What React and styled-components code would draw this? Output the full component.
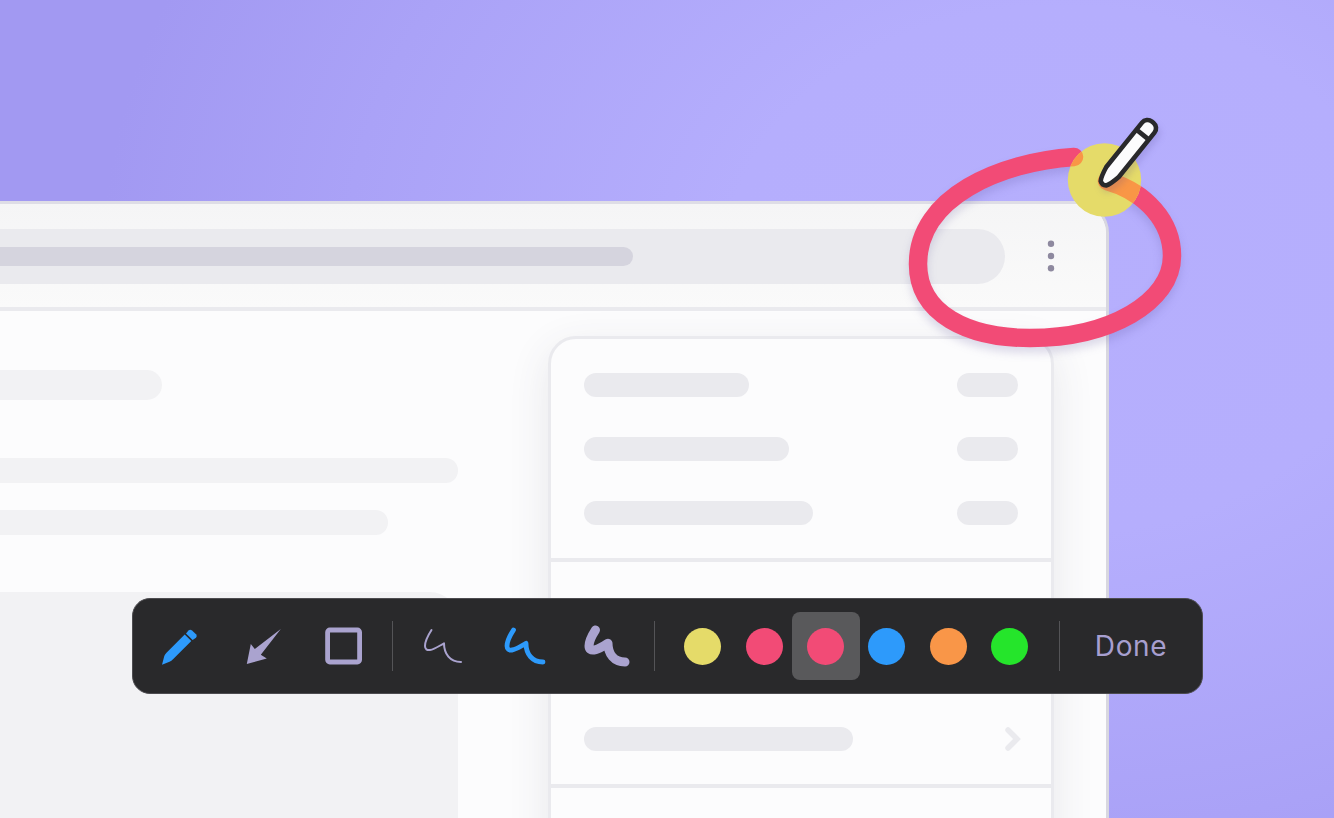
import React from "react";
import styled, { createGlobalStyle } from "styled-components";

const GlobalStyle = createGlobalStyle`
  *, *::before, *::after { box-sizing: border-box; }
  body { margin: 0; overflow: hidden; }
`;

const Scene = styled.main`
  position: relative;
  width: 1334px;
  height: 818px;
  overflow: hidden;
  padding-top: 201px;
  background: radial-gradient(ellipse 1020px 800px at 1060px 270px, #b6affd 0%, #b5aefd 33%, #aaa2f7 70%, #a299f2 94%);
  font-family: Inter, "Liberation Sans", sans-serif;
`;

const Browser = styled.section`
  display: flex;
  flex-direction: column;
  width: 1109px;
  height: 640px;
  overflow: hidden;
  border: 3px solid #d8d7e0;
  border-top-color: #dedde6;
  border-left: 0;
  border-radius: 0 32px 0 0;
  background: #fcfcfd;
`;

const BrowserBar = styled.header`
  display: flex;
  align-items: center;
  flex: none;
  height: 107px;
  border-bottom: 4px solid #eaeaee;
  background: linear-gradient(#f5f5f6, #fafafa);
`;

const AddressField = styled.div`
  display: flex;
  align-items: center;
  width: 1005px;
  height: 55px;
  margin-top: 1px;
  border-radius: 0 28px 28px 0;
  background: #eaeaee;
`;

const MenuDots = styled.svg`
  width: 8px;
  height: 34px;
  margin: 1px 0 0 42px;
  fill: #8e899f;
`;

const Page = styled.div`
  display: flex;
  flex: 1;
  min-height: 0;
`;

const Article = styled.div`
  flex: none;
  width: 548px;
  padding-top: 59px;
`;

const Bar = styled.div`
  width: ${(p) => p.$w}px;
  height: ${(p) => p.$h}px;
  margin-bottom: ${(p) => p.$after || 0}px;
  border-radius: ${(p) => (p.$flush ? `0 ${p.$h / 2}px ${p.$h / 2}px 0` : `${p.$h / 2}px`)};
  background: ${(p) => p.$tone || "#eaeaee"};
`;

const Media = styled.div`
  width: 458px;
  height: 260px;
  border-radius: 0 28px 0 0;
  background: #f2f2f4;
`;

const Panel = styled.aside`
  width: 506px;
  height: 600px;
  margin-top: 25px;
  border: 3px solid #eaeaee;
  border-radius: 28px 28px 0 0;
  background: #fcfcfd;
  box-shadow: 0 12px 42px rgba(60, 60, 80, 0.11);
`;

const PanelGroup = styled.div`
  display: flex;
  flex-direction: column;
  justify-content: ${(p) => (p.$end ? "flex-end" : "flex-start")};
  gap: 40px;
  height: ${(p) => p.$h}px;
  padding: 34px 33px 33px;
  border-bottom: 4px solid #eaeaee;
`;

const PanelRow = styled.div`
  display: flex;
  align-items: center;
  justify-content: space-between;
  height: 24px;
`;

const Chevron = styled.svg`
  width: 18px;
  height: 26px;
  margin-right: -4px;
  fill: none;
  stroke: #eaeaee;
  stroke-width: 5.5;
  stroke-linecap: round;
`;

const Annotation = styled.svg`
  position: absolute;
  inset: 0;
  width: 1334px;
  height: 818px;
  pointer-events: none;
`;

const Toolbar = styled.nav`
  position: absolute;
  left: 132px;
  top: 598px;
  display: flex;
  align-items: center;
  width: 1071px;
  height: 96px;
  border: 1px solid #4d4c50;
  border-radius: 18px;
  background: #29292b;
`;

const ToolGroup = styled.div`
  display: flex;
  align-items: center;
  justify-content: space-between;
  width: ${(p) => p.$w}px;
  padding: 0 ${(p) => p.$right}px 0 ${(p) => p.$left}px;
`;

const ToolButton = styled.button`
  display: flex;
  align-items: center;
  justify-content: center;
  width: 48px;
  height: 48px;
  padding: 0;
  border: 0;
  background: none;
  color: ${(p) => (p.$active ? "#2d9afb" : "#aaa3cf")};
`;

const ToolIcon = styled.svg`
  width: 48px;
  height: 48px;
  fill: ${(p) => (p.$line ? "none" : "currentColor")};
  stroke: ${(p) => (p.$line ? "currentColor" : "none")};
  stroke-width: ${(p) => p.$line || 0};
  stroke-linecap: round;
  stroke-linejoin: round;
`;

const Separator = styled.i`
  flex: none;
  width: 1px;
  height: 50px;
  background: #545457;
`;

const Swatches = styled.div`
  display: flex;
  align-items: center;
  width: 404px;
  padding-left: 17px;
`;

const SwatchButton = styled.button`
  display: flex;
  flex: none;
  align-items: center;
  justify-content: center;
  width: 68px;
  height: 68px;
  margin: 0 -3.3px;
  padding: 0;
  border: 0;
  border-radius: 8px;
  background: ${(p) => (p.$active ? "#59595b" : "transparent")};
`;

const Swatch = styled.i`
  width: 37px;
  height: 37px;
  border-radius: 50%;
  background: ${(p) => p.$color};
`;

const Done = styled.button`
  flex: 1;
  padding: 0;
  border: 0;
  background: none;
  color: #a79fd0;
  font: 400 28px/36px Inter, "Liberation Sans", sans-serif;
  letter-spacing: 0.6px;
`;

const loop =
  "M1074 157 C1000 162 918 197 918 264 C918 314 968 338 1030 338 C1110 338 1172 302 1172 256 C1172 222 1146 192 1107 181";
const squiggle = "M12.5 8 C8.3 14.5 6 19.5 6 24 C6 27.2 8 28.4 11 28 C15.5 27.4 20 24 25 21.3 C25 32 31 40 42 40";
const colors = ["#e5db69", "#f24b76", "#f24b76", "#2d9afb", "#f99648", "#25e52b"];

function BrowserWindow() {
  return (
    <Browser>
      <BrowserBar>
        <AddressField>
          <Bar $w={633} $h={19} $flush $tone="#d5d4de" />
        </AddressField>
        <MenuDots viewBox="0 0 8 34">
          <circle cx="4" cy="4.7" r="3.2" />
          <circle cx="4" cy="17" r="3.2" />
          <circle cx="4" cy="29.3" r="3.2" />
        </MenuDots>
      </BrowserBar>
      <Page>
        <Article>
          <Bar $w={161.5} $h={30} $after={58} $flush $tone="#f2f2f4" />
          <Bar $w={458} $h={24.5} $after={27.5} $flush $tone="#f2f2f4" />
          <Bar $w={388} $h={24.5} $after={57.5} $flush $tone="#f2f2f4" />
          <Media />
        </Article>
        <Panel>
          <PanelGroup $h={223}>
            {[165, 205, 229].map((w) => (
              <PanelRow key={w}>
                <Bar $w={w} $h={24.5} />
                <Bar $w={61} $h={24.5} />
              </PanelRow>
            ))}
          </PanelGroup>
          <PanelGroup $h={226} $end>
            <PanelRow>
              <Bar $w={269} $h={24.5} />
              <Chevron viewBox="0 0 18 26"><path d="M4 4 L13 13 L4 22" /></Chevron>
            </PanelRow>
          </PanelGroup>
        </Panel>
      </Page>
    </Browser>
  );
}

function Drawing() {
  return (
    <Annotation viewBox="0 0 1334 818">
      <defs>
        <clipPath id="tip-spot"><circle cx="1104.5" cy="180" r="36.7" /></clipPath>
        <filter id="loop-shadow" x="-10%" y="-10%" width="120%" height="130%" colorInterpolationFilters="sRGB">
          <feDropShadow dx="0" dy="6" stdDeviation="4" floodColor="#4b4490" floodOpacity="0.18" />
        </filter>
        <filter id="pencil-shadow" x="-50%" y="-50%" width="200%" height="200%" colorInterpolationFilters="sRGB">
          <feDropShadow dx="2" dy="5" stdDeviation="3" floodColor="#4b4490" floodOpacity="0.18" />
        </filter>
      </defs>
      <path d={loop} fill="none" stroke="#f24b76" strokeWidth="18.5" strokeLinecap="round" filter="url(#loop-shadow)" />
      <circle cx="1104.5" cy="180" r="36.7" fill="#e5db69" />
      <path d={loop} fill="none" stroke="#f99646" strokeWidth="18.5" strokeLinecap="round" clipPath="url(#tip-spot)" />
      <g filter="url(#pencil-shadow)">
        <g transform="translate(1102.5 184.5) rotate(38.8)" fill="#fcfcfd" stroke="#29292b" strokeWidth="4.6" strokeLinejoin="round">
          <path d="M-3.5 -1.5 Q0 1 3.5 -1.5 Q6 -5 8 -16 V-73 A7 7 0 0 0 1 -80 H-1 A7 7 0 0 0 -8 -73 V-16 Q-6 -5 -3.5 -1.5 Z" />
          <path d="M-8 -64 H8" />
        </g>
      </g>
    </Annotation>
  );
}

export default function App() {
  return (
    <Scene>
      <GlobalStyle />
      <BrowserWindow />
      <Drawing />
      <Toolbar>
        <ToolGroup $w={259} $left={23} $right={24}>
          <ToolButton $active aria-label="Pencil">
            <ToolIcon viewBox="0 0 48 48">
              <path d="M6 42.8 L8.3 34 Q8.8 32.4 10.5 30.7 L28.7 12.6 L35.3 19.1 L17 37.2 Q15.5 38.7 13.5 39.8 Z" />
              <path d="M30 11.4 L32.5 8.6 Q34.2 7 36 8.6 L40 12.2 Q41.6 14 40 15.8 L36.6 18 Z" />
            </ToolIcon>
          </ToolButton>
          <ToolButton aria-label="Arrow">
            <ToolIcon viewBox="-1.8 0 48 48">
              <path d="M41 7 L21 32.8 L27 36.6 L7 42 L11 22 L15 27 Z" />
            </ToolIcon>
          </ToolButton>
          <ToolButton aria-label="Rectangle">
            <ToolIcon viewBox="0 0 48 48" $line={4.8}>
              <rect x="7.6" y="8" width="32" height="32" rx="2.2" />
            </ToolIcon>
          </ToolButton>
        </ToolGroup>
        <Separator />
        <ToolGroup $w={261} $left={26} $right={23}>
          {[2, 4.8, 9].map((width) => (
            <ToolButton key={width} $active={width === 4.8} aria-label={`Stroke ${width}`}>
              <ToolIcon viewBox="0 0 48 48" $line={width}>
                <path d={squiggle} />
              </ToolIcon>
            </ToolButton>
          ))}
        </ToolGroup>
        <Separator />
        <Swatches>
          {colors.map((color, i) => (
            <SwatchButton key={i} $active={i === 2} aria-label={color}>
              <Swatch $color={color} />
            </SwatchButton>
          ))}
        </Swatches>
        <Separator />
        <Done>Done</Done>
      </Toolbar>
    </Scene>
  );
}
